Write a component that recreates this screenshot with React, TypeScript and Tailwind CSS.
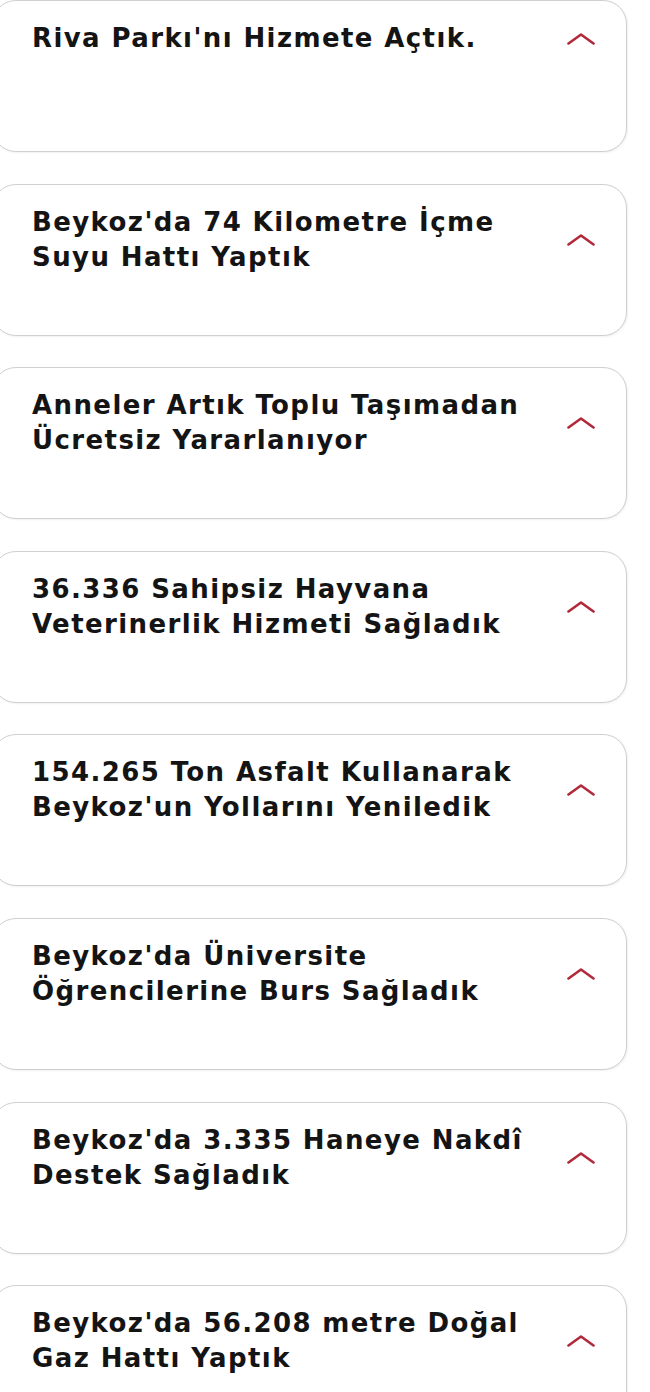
import React from "react";

const items: string[][] = [
  ["Riva Parkı'nı Hizmete Açtık."],
  ["Beykoz'da 74 Kilometre İçme", "Suyu Hattı Yaptık"],
  ["Anneler Artık Toplu Taşımadan", "Ücretsiz Yararlanıyor"],
  ["36.336 Sahipsiz Hayvana", "Veterinerlik Hizmeti Sağladık"],
  ["154.265 Ton Asfalt Kullanarak", "Beykoz'un Yollarını Yeniledik"],
  ["Beykoz'da Üniversite", "Öğrencilerine Burs Sağladık"],
  ["Beykoz'da 3.335 Haneye Nakdî", "Destek Sağladık"],
  ["Beykoz'da 56.208 metre Doğal", "Gaz Hattı Yaptık"],
];

const ChevronUp = () => (
  <svg width="28" height="12" viewBox="0 0 28 12" fill="none" className="shrink-0">
    <path
      d="M1.5 10.5 L14 1.5 L26.5 10.5"
      stroke="#b02a3c"
      strokeWidth="2.6"
      strokeLinecap="round"
      strokeLinejoin="round"
    />
  </svg>
);

export default function App() {
  return (
    <div className="w-[650px] h-[1392px] overflow-hidden bg-white">
      <div className="flex flex-col gap-[31.6px]">
        {items.map((lines, i) => (
          <div
            key={i}
            className="-ml-[8px] w-[635px] h-[152px] shrink-0 rounded-[24px] border border-[#d0d0d0] bg-white shadow-[1px_1px_2px_rgba(0,0,0,0.06)]"
          >
            <div className="flex items-center justify-between pl-[39px] pr-[31px] pt-[20px]">
              <h3
                className="font-bold text-[26px] leading-[35px] tracking-[1.4px] text-[#141414]"
                style={{ fontFamily: '"DejaVu Sans", "Noto Sans", sans-serif' }}
              >
                {lines.map((l, j) => (
                  <span key={j} className="block whitespace-nowrap">
                    {l}
                  </span>
                ))}
              </h3>
              <ChevronUp />
            </div>
          </div>
        ))}
      </div>
    </div>
  );
}
